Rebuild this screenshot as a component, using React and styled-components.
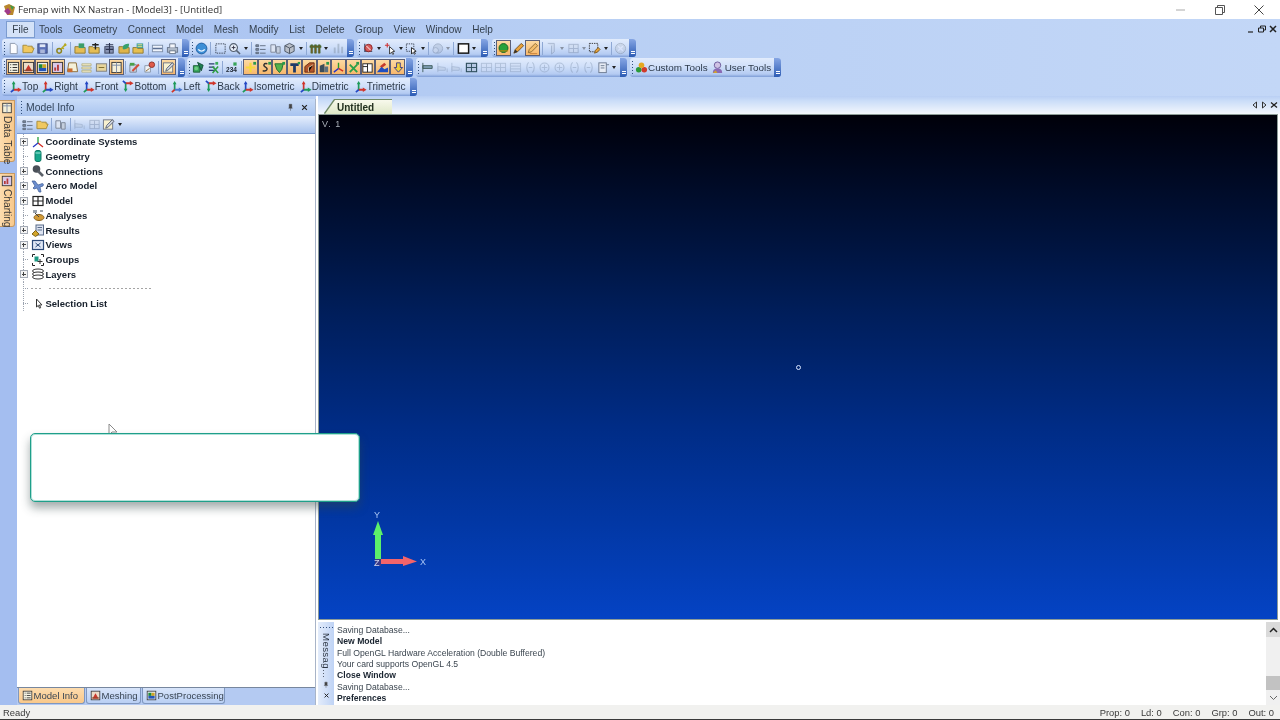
import React from 'react';
import styled, { createGlobalStyle } from 'styled-components';

const Global = createGlobalStyle`
html, body { margin: 0; padding: 0; background: #fff; }
body { font-family: "Liberation Sans", Arial, sans-serif; font-size: 10.5px; color: #26303c; overflow: hidden; }
`;

const Page = styled.div`
position: relative;
width: 1280px;
height: 720px;
display: flex;
flex-direction: column;
overflow: hidden;
filter: blur(0.4px);
`;

const TitleBar = styled.div`
height: 19px;
display: flex;
align-items: center;
background: #fff;
padding-left: 3px;
`;
const TitleText = styled.span`
margin-left: 2px;
font-family: "Open Sans", sans-serif;
font-size: 9.65px;
color: #333;
flex: 1;
`;
const WinButton = styled.div`
width: ${p => p.$w || 39}px;
display: flex;
justify-content: center;
`;

const Dock = styled.div`
height: 77px;
background: linear-gradient(90deg, #a6c0f0 0%, #b8cff4 45%, #c3d7f7 100%);
display: flex;
flex-direction: column;
`;
const MenuRow = styled.div`
height: 20px;
display: flex;
align-items: center;
padding-left: 7px;
`;
const MenuItem = styled.div`
padding: 0 5.3px;
height: 15px;
line-height: 15px;
font-size: 10.05px;
color: #34404e;
box-sizing: border-box;
${p => p.$open && `
  background: #d4e2f8;
  outline: 1px solid #7c9cd0;
`}
`;
const MdiButtons = styled.div`
margin-left: auto;
display: flex;
gap: 3px;
padding-right: 3px;
`;
const ToolRow = styled.div`
display: flex;
height: ${p => p.$h}px;
align-items: center;
`;
const Toolbar = styled.div`
width: ${p => p.$w}px;
margin-left: ${p => p.$left}px;
height: ${p => p.$h || 18}px;
display: flex;
align-items: center;
box-sizing: border-box;
padding-left: 2px;
border-radius: 3px;
background: linear-gradient(#e2ecfc 0%, #cfdff9 45%, #b4cbf2 85%, #7e9dd6 100%);
overflow: hidden;
flex: none;
`;
const Grip = styled.div`
width: 1px;
height: 13px;
margin: 0 1px 0 0;
flex: none;
background: repeating-linear-gradient(#33507c 0 1px, transparent 1px 3px);
`;
const Chevron = styled.div`
margin-left: auto;
width: 7px;
height: 100%;
flex: none;
display: flex;
justify-content: center;
align-items: flex-end;
padding-bottom: 3px;
box-sizing: border-box;
background: linear-gradient(#86a6e4, #2d5cb4);
&::after {
  content: "";
  width: 4px;
  height: 3px;
  border-bottom: 1px solid #fff;
  border-top: 1px solid #fff;
  box-sizing: border-box;
}
`;
const Tool = styled.div`
width: ${p => p.$w || 14.7}px;
height: 16px;
flex: none;
display: flex;
align-items: center;
justify-content: center;
box-sizing: border-box;
opacity: ${p => (p.$off ? 0.42 : 1)};
${p => p.$on && `
  background: linear-gradient(#fcdca6, #f7b568);
  box-shadow: inset 0 0 0 1px #5a5f78;
`}
`;
const Caret = styled.div`
width: 7px;
height: 16px;
flex: none;
display: flex;
align-items: center;
justify-content: center;
opacity: ${p => (p.$off ? 0.4 : 1)};
&::after {
  content: "";
  border: 2px solid transparent;
  border-top: 3px solid #222;
  border-bottom: 0;
}
`;
const Divider = styled.div`
width: 1px;
height: 13px;
margin: 0 1.5px;
flex: none;
background: #8ea8d4;
`;
const ViewStrip = styled.div`
display: flex;
align-items: center;
padding-left: 3px;
`;
const ViewButton = styled.div`
display: flex;
align-items: center;
margin-right: ${p => p.$gap}px;
font-size: ${p => p.$size || 10.1}px;
color: #2d3a4a;
white-space: nowrap;
`;
const Main = styled.div`
height: 609px;
display: flex;
background: #b9cff4;
`;
const SideStrip = styled.div`
width: 17px;
flex: none;
background: #a4bef0;
display: flex;
flex-direction: column;
padding-top: 4px;
gap: 11px;
box-sizing: border-box;
`;
const SideTab = styled.div`
width: 15px;
height: ${p => p.$h}px;
box-sizing: border-box;
background: linear-gradient(90deg, #fddcae, #f8c98c);
border: 1px solid #c79a62;
border-left: 0;
border-radius: 0 0 3px 0;
display: flex;
flex-direction: column;
align-items: center;
padding-top: 1px;
`;
const SideText = styled.span`
writing-mode: vertical-rl;
white-space: nowrap;
font-size: 10.2px;
color: #3b3a38;
margin-top: 2px;
`;
const Panel = styled.div`
width: 299px;
flex: none;
margin-top: 3px;
display: flex;
flex-direction: column;
box-sizing: border-box;
border-right: 1px solid #a8b4c8;
background: #fff;
`;
const PanelTitle = styled.div`
height: 17px;
flex: none;
display: flex;
align-items: center;
box-sizing: border-box;
padding: 0 0 1px 4px;
background: linear-gradient(#c9dcf8, #a9c4ef);
font-size: 10.4px;
color: #34465c;
`;
const PanelGrip = styled(Grip)`
margin: 0 4px 0 0;
`;
const PanelActions = styled.div`
margin-left: auto;
display: flex;
gap: 4px;
padding-right: 5px;
align-items: center;
`;
const PanelTools = styled.div`
height: 18px;
flex: none;
display: flex;
align-items: center;
padding-left: 3px;
background: linear-gradient(#e6effd, #a9c3ee);
border-bottom: 1px solid #7e9bd0;
box-sizing: border-box;
`;
const Tree = styled.div`
flex: 1;
padding-top: 0.4px;
`;
const TreeRow = styled.div`
height: 14.72px;
display: flex;
align-items: center;
font-weight: 700;
font-size: 9.5px;
color: #17202c;
white-space: nowrap;
`;
const Gutter = styled.div`
width: 11px;
height: 100%;
margin-left: 1px;
flex: none;
display: flex;
align-items: center;
justify-content: center;
background:
  repeating-linear-gradient(#9aa2ae 0 1px, transparent 1px 2px) center / 1px 100% no-repeat,
  repeating-linear-gradient(90deg, #9aa2ae 0 1px, transparent 1px 2px) right center / 6px 1px no-repeat;
`;
const Expander = styled.div`
width: 8px;
height: 8px;
box-sizing: border-box;
border: 1px solid #a4aab4;
background:
  linear-gradient(#444, #444) center / 4px 1px no-repeat,
  linear-gradient(#444, #444) center / 1px 4px no-repeat,
  #f4f4f4;
`;
const TreeIcon = styled.div`
width: 14px;
height: 14px;
margin: 0 1px 0 1.5px;
flex: none;
display: flex;
`;
const DashLine = styled.div`
flex: none;
width: ${p => p.$w}px;
margin-left: ${p => p.$m}px;
height: 1px;
background: repeating-linear-gradient(90deg, #a4a4a4 0 2px, transparent 2px 4px);
`;
const BottomTabs = styled.div`
height: 18px;
flex: none;
display: flex;
background: #b4caf2;
border-top: 1px solid #77879e;
box-sizing: border-box;
padding-left: 1px;
gap: 1px;
`;
const BottomTab = styled.div`
width: ${p => p.$w}px;
height: 16px;
box-sizing: border-box;
display: flex;
align-items: center;
padding-left: 2.5px;
gap: 1px;
font-size: 9.55px;
white-space: nowrap;
color: #3a4654;
border: 1px solid #7f97bf;
border-top: 0;
border-radius: 0 0 3px 3px;
background: ${p => (p.$on ? 'linear-gradient(#fddcae, #f9c88a)' : 'linear-gradient(#d8e5fa, #b9cff4)')};
`;
const RightCol = styled.div`
flex: 1;
display: flex;
flex-direction: column;
padding-left: 2px;
background: #fff;
min-width: 0;
`;
const TabStrip = styled.div`
height: 18px;
flex: none;
display: flex;
align-items: flex-end;
padding-left: 7px;
background: linear-gradient(#b9cff4 0%, #c9dcf8 25%, #f4f7fd 100%);
`;
const TabShape = styled.div`
filter: drop-shadow(0 -0.6px 0 #6f8a68) drop-shadow(-0.5px 0 0 #6f8a68);
`;
const DocTab = styled.div`
width: 55px;
height: 14px;
padding-left: 12px;
display: flex;
align-items: center;
font-weight: 700;
font-size: 10px;
color: #22301f;
background: linear-gradient(#f8f9ec, #dfe8c8);
clip-path: polygon(10px 0, 100% 0, 100% 100%, 0 100%);
`;
const TabActions = styled.div`
margin-left: auto;
display: flex;
gap: 3px;
align-items: center;
height: 100%;
padding-right: 2px;
`;
const Viewport = styled.div`
position: relative;
flex: none;
height: 506px;
margin-right: 2px;
box-sizing: border-box;
border: 1px solid #8d9c98;
background: linear-gradient(#00000a 0%, #001d58 38%, #002c86 62%, #0443c4 100%);
`;
const ViewLabel = styled.span`
position: absolute;
left: 3px;
top: 4px;
font-size: 9px;
letter-spacing: 1px;
color: #a9b0b8;
`;
const CenterMark = styled.div`
position: absolute;
left: 477px;
top: 250px;
width: 3px;
height: 3px;
border: 1px solid #d8e4ff;
border-radius: 50%;
`;
const Triad = styled.svg`
position: absolute;
left: 50px;
top: 394px;
`;
const MessageArea = styled.div`
margin-top: 2px;
flex: 1;
display: flex;
min-height: 0;
`;
const MessageGrip = styled.div`
width: 16px;
flex: none;
display: flex;
flex-direction: column;
align-items: center;
background: linear-gradient(90deg, #e3ecfb, #bfd3f5);
padding-top: 5px;
box-sizing: border-box;
`;
const GripDots = styled.div`
width: 13px;
height: 1px;
flex: none;
background: repeating-linear-gradient(90deg, #33507c 0 1px, transparent 1px 3px);
`;
const MessageTitle = styled.span`
writing-mode: vertical-rl;
white-space: nowrap;
margin-top: 5px;
font-size: 9.6px;
color: #2c3542;
letter-spacing: 0.4px;
height: 46px;
`;
const MessageActions = styled.div`
margin-top: 2px;
display: flex;
flex-direction: column;
gap: 2px;
align-items: center;
`;
const MessageList = styled.div`
flex: 1;
padding: 3px 0 0 3px;
`;
const MessageLine = styled.div`
height: 11.35px;
line-height: 11.35px;
font-size: 8.65px;
font-weight: ${p => (p.$strong ? 700 : 400)};
color: ${p => (p.$strong ? '#1a2430' : '#3c4650')};
white-space: nowrap;
`;
const Scrollbar = styled.div`
width: 14px;
flex: none;
display: flex;
flex-direction: column;
background: #f0f0f0;
`;
const ScrollUp = styled.div`
height: 15px;
flex: none;
display: flex;
align-items: center;
justify-content: center;
background: #dadada;
`;
const ScrollThumb = styled.div`
margin-top: auto;
height: 14px;
flex: none;
background: #c2c2c2;
`;
const ScrollDown = styled.div`
height: 15px;
flex: none;
display: flex;
align-items: center;
justify-content: center;
`;
const StatusBar = styled.div`
height: 15px;
flex: none;
display: flex;
align-items: center;
background: #f1f1ef;
border-bottom: 1px solid #3a3a3a;
box-sizing: border-box;
padding: 1px 0 0 3px;
font-size: 9.4px;
color: #3a3a3a;
`;
const StatusCells = styled.div`
margin-left: auto;
display: flex;
gap: 11px;
padding-right: 6px;
`;
const Popup = styled.div`
position: absolute;
left: 30px;
top: 433px;
width: 330px;
height: 69px;
box-sizing: border-box;
background: #fff;
border: 1px solid #1f9f8a;
border-radius: 5px;
box-shadow: inset 0 0 0 1px rgba(60, 180, 160, 0.4), 0 6px 10px rgba(50, 70, 70, 0.45);
`;
const Pointer = styled.svg`
position: absolute;
left: 108px;
top: 423px;
`;

const S = ({ children, size = 13 }) => (
  <svg width={size} height={size} viewBox="0 0 14 14" style={{ display: 'block', flex: 'none' }}>{children}</svg>
);

const axisIcon = (a, b, c, flip) => (
  <g transform={flip ? 'translate(0 14) scale(1 -1)' : undefined}>
    <path d="M5 3v8" stroke={a} strokeWidth="1.800" />
    <path d="M3 4.500 5 1l2 3.500z" fill={a} />
    <path d="M5 10.500h5" stroke={b} strokeWidth="2" />
    <path d="M9.500 8l4 2.500-4 2.500z" fill={b} />
    <path d="M5 10.500 2 13" stroke={c} strokeWidth="1.800" />
  </g>
);

const glyphs = {
  doc: <path d="M3.500 1.500h5l2.500 2.500v8.500h-7.500z" fill="#fbfcff" stroke="#8c97ab" />,
  folder: <path d="M1 11.500v-8h4l1 1h5v2h2l-2 5z" fill="#f0c860" stroke="#a58a3a" />,
  save: <><rect x="2" y="2" width="10" height="10" fill="#5a70b8" stroke="#39477c" /><rect x="4" y="2.500" width="6" height="3" fill="#dfe6f5" /><rect x="4.500" y="8" width="5" height="4" fill="#aab6da" /></>,
  key: <><circle cx="4.500" cy="9.500" r="2.500" fill="none" stroke="#8d8420" strokeWidth="1.600" /><path d="M6.500 7.500 12 2m-2 0 2 2M8 6l1.500 1.500" stroke="#b6aa24" strokeWidth="1.600" /></>,
  fgreen: <><path d="M1 12V5h4l1 1h6v6z" fill="#e5bd55" stroke="#8f7a36" /><rect x="5" y="1.500" width="6" height="5" fill="#3c9e6a" /></>,
  fplus: <><path d="M1 12V5h4l1 1h6v6z" fill="#e5bd55" stroke="#8f7a36" /><path d="M8 1v7M4.500 3h7" stroke="#222" strokeWidth="1.500" /></>,
  fgrid: <><rect x="2" y="5" width="9" height="7" fill="#8792b2" stroke="#3d4660" /><path d="M7 1v11M3 3h8M3 8h8" stroke="#2c3450" strokeWidth="1.200" /></>,
  fleaf: <><path d="M1 12V5h4l1 1h6v6z" fill="#dfb44a" stroke="#8f7a36" /><path d="M5 7c0-4 3-5 7-5 0 4-2 6-6 6z" fill="#37a06e" /></>,
  fmix: <><path d="M1 12V6h4l1 1h6v5z" fill="#e6bf50" stroke="#8f7a36" /><rect x="5" y="1.500" width="7" height="5" fill="#3f9f9c" /><path d="M6 3h5M6 5h5" stroke="#f3e27a" /></>,
  dash: <><rect x="1.500" y="3.500" width="11" height="7" fill="#eef3fb" stroke="#7d8ea8" /><path d="M2 7h10" stroke="#5c6f92" strokeWidth="1.600" /></>,
  print: <><rect x="1.500" y="6" width="11" height="5" fill="#aeb9c8" stroke="#69778c" /><path d="M4 6V2h6v4" fill="#f5f7fb" stroke="#69778c" /><rect x="4" y="9.500" width="6" height="3" fill="#fff" stroke="#69778c" /></>,
  globe: <><circle cx="7" cy="7" r="5.800" fill="#3d8fd6" stroke="#1f5da0" /><path d="M3.500 8c2 2.500 5 2.500 7 0" fill="none" stroke="#eaf4ff" strokeWidth="1.500" /></>,
  sel: <rect x="2" y="2" width="10" height="10" fill="none" stroke="#3a4454" strokeDasharray="1.500 1" />,
  zoom: <><circle cx="6" cy="6" r="4.200" fill="#e7eef9" stroke="#566272" strokeWidth="1.200" /><path d="M4 6h4M6 4v4" stroke="#334" /><path d="M9 9l4 4" stroke="#566272" strokeWidth="1.600" /></>,
  list: <path d="M2 3h3v2H2zM2 7h3v2H2zM2 11h3v1.500H2zM6.500 4h6M6.500 8h6M6.500 12h6" fill="#7d8a9c" stroke="#5f6c80" />,
  cols: <><path d="M2 3h5v8H2z" fill="#dce4f2" stroke="#7d8798" /><path d="M8 5h4v7H8z" fill="#c5cfde" stroke="#7d8798" /></>,
  cube: <><path d="M7 1.500 12 4v6l-5 2.500L2 10V4z" fill="#b9bfc8" stroke="#4c5563" /><path d="M2 4l5 2.500L12 4M7 6.500v6" fill="none" stroke="#4c5563" /></>,
  bars: <path d="M2 3h2v9H2zM6 3h2v9H6zM10 3h2v9h-2zM1 4h12v2H1z" fill="#7c5a1e" stroke="#3a6e3a" strokeWidth=".6" />,
  barsOff: <path d="M3 12V6h2v6zM7 12V2h2v10zM11 12V5h2v7z" fill="#7a8a9c" />,
  noView: <><path d="M3 2v8h8" fill="none" stroke="#4a5a78" strokeWidth="1.400" /><circle cx="7" cy="6.500" r="4" fill="#d65c5c" stroke="#8a2424" /><path d="M4.500 4l5 5" stroke="#fff" /></>,
  pickArrow: <><path d="M3.500 1v5M1 3.500h5" stroke="#d03434" strokeWidth="1.200" /><path d="M6 5v8l2-2 1.500 2.500 1-.8L9 10.500l2.500-.5z" fill="#fff" stroke="#333" /></>,
  pickBox: <><rect x="1.500" y="2" width="8" height="8" fill="none" stroke="#3a4454" strokeDasharray="1.500 1" /><path d="M7 6v7l1.800-1.800 1.400 2 .9-.7-1.200-2 2.100-.5z" fill="#fff" stroke="#222" /></>,
  lump: <><circle cx="7.500" cy="7" r="5" fill="#a9b8d0" stroke="#65738c" /><circle cx="5" cy="9" r="3" fill="#c9d2e2" stroke="#65738c" /></>,
  frame: <rect x="1.500" y="2" width="11" height="10" fill="#fff" stroke="#161616" strokeWidth="1.600" />,
  ball: <><circle cx="7" cy="6.500" r="4.800" fill="#27a23a" stroke="#116022" /><path d="M2 9.500h10" stroke="#b8860b" strokeWidth="1.200" /></>,
  pencil: <><path d="M2 12l1.500-4L10 1.500 12.500 4 6 10.500z" fill="#e9a13a" stroke="#76501a" /><path d="M2 12l1.500-4L6 10.500z" fill="#333" /></>,
  eraser: <><path d="M2.500 11.500l1-3.500L10 1.500 12.500 4 6 10.500z" fill="#f3bd6a" stroke="#8b6a34" /><path d="M4 12.500h8" stroke="#c7813a" /></>,
  doorOff: <path d="M3 1.500h7v9l-3 2.500V4" fill="#c2cddf" stroke="#6f7f9a" />,
  gridOff: <><rect x="2" y="2.500" width="10" height="9" fill="#cfd9ea" stroke="#6f7f9a" /><path d="M7 2.500v9M2 7h10" stroke="#6f7f9a" /></>,
  penBox: <><rect x="1.500" y="1.500" width="9" height="9" fill="none" stroke="#333" strokeDasharray="1.500 1" /><path d="M7 12l1-3 3-3 2 2-3 3z" fill="#e5a23c" stroke="#7b5a22" /></>,
  noOff: <><circle cx="7" cy="7" r="5.500" fill="#bfc8d6" stroke="#76818f" /><path d="M4.500 4.500l5 5m0-5-5 5" stroke="#eef" strokeWidth="1.400" /></>,
  info: <><rect x="1.500" y="1.500" width="11" height="11" fill="#f4f2e2" stroke="#333" /><path d="M3.500 4h1M6 4h5M3.500 7h1M6 7h5M3.500 10h1M6 10h5" stroke="#222" /></>,
  mesh: <><rect x="1.500" y="1.500" width="11" height="11" fill="#ecdcc8" stroke="#333" /><path d="M3 11 7 4l4 7z" fill="#c9382c" /><path d="M2 10h10" stroke="#7f4d2e" /></>,
  post: <><rect x="1.500" y="1.500" width="11" height="11" fill="#e9f0f9" stroke="#333" /><rect x="3" y="3.500" width="4" height="4" fill="#1f8a38" /><rect x="7" y="3.500" width="4" height="4" fill="#d0a522" /><rect x="3" y="7.500" width="8" height="3.500" fill="#2456b8" /></>,
  plot: <><rect x="1.500" y="1.500" width="11" height="11" fill="#d9c9e8" stroke="#333" /><path d="M3.500 10.500V7h2v3.500zM6.500 10.500V4h2v6.500z" fill="#b53a3a" /></>,
  iconCard: <><path d="M3 2h8l1.500 9.500h-11z" fill="#f4f0d8" stroke="#8a6a34" /><rect x="2" y="8" width="5" height="4" fill="#c96a2e" /></>,
  lines: <path d="M2 3h10v2H2zM2 6.500h10v2H2zM2 10h10v2H2z" fill="#f3eccb" stroke="#a8a46c" strokeWidth=".7" />,
  mini: <><rect x="1.500" y="3" width="11" height="8" fill="#e6d49c" stroke="#7d7d7d" /><path d="M4 7h6" stroke="#7b6a2a" /></>,
  tall: <><rect x="2" y="1.500" width="10" height="11" fill="#f5f0d8" stroke="#333" /><path d="M7 1.500v11M2 4.500h10" stroke="#7a8aa6" /></>,
  redPin: <><path d="M2 12V5h6v7z" fill="#eff3f8" stroke="#8997ac" /><circle cx="9.500" cy="4" r="3" fill="#df5a4a" stroke="#8e3228" /><path d="M7 8 3 11" stroke="#8c6a30" /></>,
  paint: <><path d="M2 12V4h7v8z" fill="#cdd8e8" stroke="#7b8698" /><path d="M4 10l7-7 1.500 1.500-7 7z" fill="#cf4f3a" /><rect x="2" y="2" width="5" height="3" fill="#4aa04a" /></>,
  note: <><rect x="1.500" y="2" width="10" height="10" fill="#f8f1cf" stroke="#6f7688" /><path d="M4 11l1-3 6-6 2 1.500-6 6z" fill="#cfd4de" stroke="#5a6274" /></>,
  gBlue: <><path d="M1.500 5h7v7h-7z" fill="#39a55a" stroke="#1d5f3a" /><path d="M6 1.500l6 3-2 6z" fill="#1f7f52" stroke="#144e38" /><circle cx="4.500" cy="8" r="2" fill="#6ccb84" /></>,
  gCross: <><path d="M2 3h6M2 6.500h6M2 10h6" stroke="#2a3c70" strokeWidth="1.300" /><path d="M6 6l6 7m0-7-6 7" stroke="#2f9e44" strokeWidth="1.700" /><rect x="9" y="1" width="3" height="3" fill="#3aad5a" /></>,
  num: <><text x="7" y="12" textAnchor="middle" fontSize="7" fontWeight="700" fontFamily="Liberation Sans" fill="#1c2430">234</text><rect x="9" y="1.500" width="3.500" height="3.500" fill="#39a55a" /></>,
  oPlus: <><path d="M7 2v10M2 7h10" stroke="#f5d93a" strokeWidth="2.400" /><rect x="10" y="1" width="3" height="3" fill="#2a9a4a" /></>,
  oS: <><path d="M9 3C5 2 4 5 7 6.500s2 5-3 4" fill="none" stroke="#333" strokeWidth="1.500" /><rect x="10" y="1" width="3" height="3" fill="#2a9a4a" /></>,
  oShield: <><path d="M2 3h9l-1.500 6L7 12.500 4 9z" fill="#54b24a" stroke="#1f6c30" /><rect x="10" y="1" width="3" height="3" fill="#2a9a4a" /></>,
  oT: <><path d="M2.500 2.500h9v3h-3v7h-3v-7h-3z" fill="#1f3a68" /><rect x="10.500" y="1" width="2.500" height="2.500" fill="#2a9a4a" /></>,
  oBrick: <><path d="M2 12V6l5-4h5v10z" fill="#b2552c" stroke="#6a3018" /><path d="M6 12V7l5-3" stroke="#e8c59a" /></>,
  oDark: <><path d="M3 12V5l5-2v9z" fill="#3c4d5a" /><path d="M8 12V6h4v6z" fill="#5c7080" /><rect x="10" y="1" width="3" height="3" fill="#2a9a4a" /></>,
  oAxes: <><path d="M7 2v6" stroke="#2a9a2a" strokeWidth="1.500" /><path d="M7 8l5 3" stroke="#d2301f" strokeWidth="1.500" /><path d="M7 8l-5 4" stroke="#2332c8" strokeWidth="1.500" /></>,
  oX: <><path d="M3 4l8 8m0-8-8 8" stroke="#2aa14a" strokeWidth="2" /><rect x="10" y="1" width="3" height="3" fill="#2a9a4a" /></>,
  oBook: <><rect x="2" y="3" width="10" height="9" fill="#fff" stroke="#222" /><path d="M7 3v9M2 6h5" stroke="#222" /></>,
  oHill: <><path d="M1 12l5-6 3 3 4-2v5z" fill="#1f4ec0" /><path d="M4 6l5-4 2 2-4 3z" fill="#c53a2c" /></>,
  oArrow: <path d="M6 2h4v5h2.500L8 12 3.500 7H6z" fill="#f2d23a" stroke="#3a3a8a" />,
  tBar: <path d="M2 2v10M2 5h10v3H2z" fill="#7fa0b4" stroke="#3f5c5c" />,
  tBarOff: <path d="M2 2v10M2 6l8 1v3H2zM12 8v4" fill="#b7c6da" stroke="#7f92ad" />,
  tGridDk: <><rect x="1.500" y="2.500" width="11" height="9" fill="#b6c8e4" stroke="#2f4f5e" strokeWidth="1.200" /><path d="M1.500 7h11M7 2.500v9" stroke="#2f4f5e" /></>,
  tGrid: <><rect x="1.500" y="2.500" width="11" height="9" fill="#cfdcf2" stroke="#7f92ad" /><path d="M1.500 7h11M7 2.500v9" stroke="#7f92ad" /></>,
  tRows: <><rect x="1.500" y="2.500" width="11" height="9" fill="#cfdcf2" stroke="#7f92ad" /><path d="M1.500 5.500h11M1.500 8.500h11" stroke="#7f92ad" /></>,
  tRound: <path d="M5 1.500C3 3 3 5 3 7s0 4 2 5.500M9 1.500c2 1.500 2 3.500 2 5.500s0 4-2 5.500M5 7h4" fill="none" stroke="#7f92ad" strokeWidth="1.200" />,
  tHex: <><circle cx="7" cy="7" r="4.800" fill="none" stroke="#7f92ad" strokeWidth="1.200" /><path d="M7 4v6M4 7h6" stroke="#7f92ad" /></>,
  tDoc: <><rect x="2" y="2" width="8" height="10.500" fill="#e7ecf5" stroke="#6c7a90" /><path d="M4 5h4M4 7.500h4" stroke="#6c7a90" /><path d="M10 4h3" stroke="#6c7a90" /></>,
  colorBalls: <><circle cx="4" cy="9.500" r="3" fill="#2a9a3a" /><circle cx="10" cy="9.500" r="3" fill="#d03a2a" /><circle cx="7" cy="4.500" r="3" fill="#e4a820" /></>,
  person: <><circle cx="7" cy="4.500" r="3.500" fill="#cfc2e4" stroke="#6a5a9a" /><path d="M2 13c0-4 2-5 5-5s5 1 5 5z" fill="#8a6ab4" /><path d="M2 13l3-3 2 3z" fill="#d0a030" /></>,
  coord: <><path d="M7 2v6" stroke="#23a03c" strokeWidth="1.300" /><path d="M7 8l5 4" stroke="#d02a20" strokeWidth="1.300" /><path d="M7 8l-5 4" stroke="#2338c4" strokeWidth="1.300" /></>,
  cyl: <><rect x="4" y="1.500" width="6" height="11" rx="2" fill="#17a58a" stroke="#0f7a66" /><path d="M4.500 4h5" stroke="#a6e8da" /></>,
  conn: <><circle cx="5.500" cy="5" r="3.800" fill="#4a5058" /><path d="M7 7l5 5" stroke="#5a6068" strokeWidth="2.600" /></>,
  plane: <path d="M1 2l3 0 3 4 3-1c2-1 3 0 2 2l-3 1 1 5H8L6 9l-3 1-1-1 2-2z" fill="#6c8ecf" stroke="#3d5c94" strokeWidth=".7" />,
  mgrid: <><rect x="2" y="2.500" width="10" height="9" fill="#fff" stroke="#222" strokeWidth="1.200" /><path d="M7 2.500v9M2 7h10" stroke="#222" strokeWidth="1.200" /></>,
  ana: <><path d="M2 2h4v3H2zM9 2h3v2H9z" fill="#9ba3ad" /><ellipse cx="8" cy="9.500" rx="5" ry="3" fill="#d29a36" stroke="#875f1c" /><path d="M4 5l4 4" stroke="#444" /></>,
  res: <><rect x="5" y="2" width="7.500" height="10" fill="#dde4f2" stroke="#596a88" /><path d="M6.500 4.500h4.500M6.500 7h4.500" stroke="#596a88" /><path d="M4.500 7.500 8 11l-3.500 2.500L1 11z" fill="#d2a52a" stroke="#7f6216" /></>,
  vw: <><rect x="1.500" y="2.500" width="11" height="9" fill="#dfe7f5" stroke="#2c4a78" strokeWidth="1.200" /><path d="M4.500 5l5 4m0-4-5 4" stroke="#2c4a78" /></>,
  grp: <><path d="M1.500 4V1.500H4M10 1.500h2.500V4M12.500 10v2.500H10M4 12.500H1.500V10" fill="none" stroke="#222" /><rect x="3.500" y="3.500" width="4" height="5" fill="#1f9a84" /><path d="M9 6v5M6.500 8.500h5" stroke="#333" /></>,
  lay: <><ellipse cx="7" cy="4" rx="5.500" ry="2" fill="#fff" stroke="#333" /><ellipse cx="7" cy="7" rx="5.500" ry="2" fill="#fff" stroke="#333" /><ellipse cx="7" cy="10" rx="5.500" ry="2" fill="#fff" stroke="#333" /></>,
  cur: <path d="M5.500 2v8l1.800-1.600 1.200 2.800 1.200-.5-1.200-2.700 2.400-.1z" fill="#fff" stroke="#333" />,
  pin: <path d="M5 2h4v5l1 1H4l1-1zM7 8v4" fill="#444" stroke="#444" strokeWidth=".7" />,
  x: <path d="M4 4l6 6m0-6-6 6" stroke="#222" strokeWidth="1.500" />,
};

const Glyph = ({ name, size = 13 }) => <S size={size}>{glyphs[name]}</S>;

// "name" = plain, ":a" = active, ":d" = greyed out, "+" = with a drop arrow, "|" = separator
const renderTools = (spec) =>
  spec.split(' ').map((tok, i) => {
    if (tok === '|') return <Divider key={i} />;
    const drop = tok.includes('+');
    const [name, flag] = tok.replace('+', '').split(':');
    const off = flag === 'd';
    return (
      <React.Fragment key={i}>
        <Tool $on={flag === 'a'} $off={off}><Glyph name={name} /></Tool>
        {drop && <Caret $off={off} />}
      </React.Fragment>
    );
  });

const Bar = ({ left, w, h, spec, children }) => (
  <Toolbar $left={left} $w={w} $h={h}>
    <Grip />
    {spec && renderTools(spec)}
    {children}
    <Chevron />
  </Toolbar>
);

const menus = ['File', 'Tools', 'Geometry', 'Connect', 'Model', 'Mesh', 'Modify', 'List', 'Delete', 'Group', 'View', 'Window', 'Help'];

const views = [
  ['Top', '#1f9a5a', '#d0342a', '#2448c4', 3, false],
  ['Right', '#d0342a', '#2448c4', '#1f9a5a', 4, false],
  ['Front', '#2448c4', '#d0342a', '#1f9a5a', 3, false],
  ['Bottom', '#1f9a5a', '#d0342a', '#2448c4', 4, true],
  ['Left', '#1f9a5a', '#4a78d0', '#d0342a', 4, false],
  ['Back', '#1f9a5a', '#d0342a', '#2448c4', 1, true],
  ['Isometric', '#2448c4', '#d0342a', '#1f9a5a', 4, false],
  ['Dimetric', '#d0342a', '#1f9a5a', '#2448c4', 5, false],
  ['Trimetric', '#1f9a5a', '#d0342a', '#2448c4', 0, false],
];

const treeItems = [
  ['Coordinate Systems', 'coord', true],
  ['Geometry', 'cyl', false],
  ['Connections', 'conn', true],
  ['Aero Model', 'plane', true],
  ['Model', 'mgrid', true],
  ['Analyses', 'ana', false],
  ['Results', 'res', true],
  ['Views', 'vw', true],
  ['Groups', 'grp', false],
  ['Layers', 'lay', true],
];

const messages = [
  ['Saving Database...'],
  ['New Model', true],
  ['Full OpenGL Hardware Acceleration (Double Buffered)'],
  ['Your card supports OpenGL 4.5'],
  ['Close Window', true],
  ['Saving Database...'],
  ['Preferences', true],
];

const App = () => (
  <Page>
    <Global />
    <TitleBar>
      <svg width="13" height="13" viewBox="0 0 13 13">
        <path d="M1 3l5-2 6 3-2 8-6 0z" fill="#b8862c" />
        <path d="M1 8l4-3 3 4-3 3z" fill="#a03a8c" />
        <path d="M7 2l4 2-2 3z" fill="#3f9a4a" />
      </svg>
      <TitleText>Femap with NX Nastran - [Model3] - [Untitled]</TitleText>
      <WinButton><svg width="10" height="10"><path d="M0 5h9" stroke="#aaa" /></svg></WinButton>
      <WinButton><svg width="10" height="10"><path d="M.5 2.500h7v7h-7zM2.500 2.500v-2h7v7h-2" fill="none" stroke="#555" /></svg></WinButton>
      <WinButton><svg width="10" height="10"><path d="M.5.500l9 9m0-9-9 9" stroke="#444" /></svg></WinButton>
      <WinButton $w={2} />
    </TitleBar>

    <Dock>
      <MenuRow>
        {menus.map((m, i) => <MenuItem key={m} $open={i === 0}>{m}</MenuItem>)}
        <MdiButtons>
          <svg width="8" height="8"><path d="M1 7h5" stroke="#222" strokeWidth="1.200" /></svg>
          <svg width="8" height="8"><path d="M.5 3h5v4h-5zM2.500 3V1h5v4h-2" fill="none" stroke="#222" /></svg>
          <svg width="8" height="8"><path d="M1 1l6 6m0-6-6 6" stroke="#222" strokeWidth="1.500" /></svg>
        </MdiButtons>
      </MenuRow>
      <ToolRow $h={18.5}>
        <Bar left={2} w={187} spec="doc folder save | key | fgreen fplus fgrid fleaf fmix | dash print" />
        <Bar left={1} w={164} spec="globe | sel zoom+ | list cols cube+ | bars+ barsOff:d" />
        <Bar left={3} w={131} spec="noView+ pickArrow+ pickBox+ | lump:d+ | frame+" />
        <Bar left={4} w={144} spec="ball:a pencil eraser:a | doorOff:d+ gridOff:d+ penBox+ | noOff:d" />
      </ToolRow>
      <ToolRow $h={19.5}>
        <Bar left={2} w={183} h={19} spec="info:a mesh:a post:a plot:a iconCard lines mini tall:a | paint redPin | note:a" />
        <Bar left={2} w={226} h={19} spec="gBlue gCross | num | oPlus:a oS:a oShield:a oT:a oBrick:a oDark:a oAxes:a oX:a oBook:a oHill:a oArrow:a" />
        <Bar left={3} w={211} h={19} spec="tBar tBarOff:d tBarOff:d tGridDk tGrid:d tGrid:d tRows:d tRound:d tHex:d tHex:d tRound:d tRound:d tDoc+" />
        <Bar left={3} w={151} h={19}>
          <Tool $w={14}><Glyph name="colorBalls" /></Tool>
          <ViewButton $gap={3} $size={9.9}>Custom Tools</ViewButton>
          <Tool $w={14}><Glyph name="person" /></Tool>
          <ViewButton $gap={0} $size={9.9}>User Tools</ViewButton>
        </Bar>
      </ToolRow>
      <ToolRow $h={19}>
        <Bar left={2} w={415} h={18}>
          <ViewStrip>
            {views.map(([label, a, b, c, gap, flip]) => (
              <ViewButton key={label} $gap={gap}>
                <S size={13}>{axisIcon(a, b, c, flip)}</S>
                {label}
              </ViewButton>
            ))}
          </ViewStrip>
        </Bar>
      </ToolRow>
    </Dock>

    <Main>
      <SideStrip>
        <SideTab $h={62}>
          <Glyph name="tall" size={12} />
          <SideText>Data Table</SideText>
        </SideTab>
        <SideTab $h={54}>
          <Glyph name="plot" size={12} />
          <SideText>Charting</SideText>
        </SideTab>
      </SideStrip>

      <Panel>
        <PanelTitle>
          <PanelGrip />
          Model Info
          <PanelActions>
            <Glyph name="pin" size={9} />
            <Glyph name="x" size={11} />
          </PanelActions>
        </PanelTitle>
        <PanelTools>
          {renderTools('list folder | cols | tBarOff:d gridOff:d note+')}
        </PanelTools>
        <Tree>
          {treeItems.map(([label, icon, expand]) => (
            <TreeRow key={label}>
              <Gutter>{expand && <Expander />}</Gutter>
              <TreeIcon><Glyph name={icon} size={14} /></TreeIcon>
              {label}
            </TreeRow>
          ))}
          <TreeRow>
            <Gutter />
            <DashLine $w={10} $m={2} />
            <DashLine $w={103} $m={8} />
          </TreeRow>
          <TreeRow>
            <Gutter />
            <TreeIcon><Glyph name="cur" size={14} /></TreeIcon>
            Selection List
          </TreeRow>
        </Tree>
        <BottomTabs>
          <BottomTab $w={67} $on><Glyph name="info" size={11} />Model Info</BottomTab>
          <BottomTab $w={55}><Glyph name="mesh" size={11} />Meshing</BottomTab>
          <BottomTab $w={83}><Glyph name="post" size={11} />PostProcessing</BottomTab>
        </BottomTabs>
      </Panel>

      <RightCol>
        <TabStrip>
          <TabShape><DocTab>Untitled</DocTab></TabShape>
          <TabActions>
            <svg width="6" height="8"><path d="M4.500 1v6L1 4z" fill="none" stroke="#333" /></svg>
            <svg width="6" height="8"><path d="M1.500 1v6L5 4z" fill="none" stroke="#333" /></svg>
            <svg width="8" height="8"><path d="M1 1.500l6 5m0-5-6 5" stroke="#222" strokeWidth="1.300" /></svg>
          </TabActions>
        </TabStrip>
        <Viewport>
          <ViewLabel>V. 1</ViewLabel>
          <CenterMark />
          <Triad width="70" height="64" viewBox="0 0 70 64">
            <rect x="6" y="24" width="6" height="28" fill="#5cf06a" />
            <path d="M9 12 14 26H4z" fill="#5cf06a" />
            <rect x="6" y="50" width="6" height="7" fill="#3a3a88" />
            <rect x="12" y="50" width="24" height="5" fill="#f2646a" />
            <path d="M34 47 48 52.500 34 57z" fill="#f2646a" />
            <text x="5" y="9" fontSize="9" fill="#a8c4f4" fontFamily="Liberation Sans">Y</text>
            <text x="51" y="56" fontSize="9" fill="#a8c4f4" fontFamily="Liberation Sans">X</text>
            <text x="5" y="57" fontSize="9" fill="#d0d8f0" fontFamily="Liberation Sans">Z</text>
          </Triad>
        </Viewport>
        <MessageArea>
          <MessageGrip>
            <GripDots />
            <MessageTitle>Messag...</MessageTitle>
            <MessageActions>
              <Glyph name="pin" size={8} />
              <Glyph name="x" size={9} />
            </MessageActions>
          </MessageGrip>
          <MessageList>
            {messages.map(([text, strong], i) => (
              <MessageLine key={i} $strong={strong}>{text}</MessageLine>
            ))}
          </MessageList>
          <Scrollbar>
            <ScrollUp><svg width="9" height="6"><path d="M1 5l3.500-3.500L8 5" fill="none" stroke="#222" strokeWidth="1.500" /></svg></ScrollUp>
            <ScrollThumb />
            <ScrollDown><svg width="9" height="6"><path d="M1 1l3.500 3.500L8 1" fill="none" stroke="#666" /></svg></ScrollDown>
          </Scrollbar>
        </MessageArea>
      </RightCol>
    </Main>

    <StatusBar>
      Ready
      <StatusCells>
        <span>Prop: 0</span>
        <span>Ld: 0</span>
        <span>Con: 0</span>
        <span>Grp: 0</span>
        <span>Out: 0</span>
      </StatusCells>
    </StatusBar>

    <Pointer width="10" height="14" viewBox="0 0 10 14">
      <path d="M1 1v11l3-3 5 0z" fill="#fff" stroke="#8a8a8a" />
    </Pointer>
    <Popup />
  </Page>
);

export default App;
